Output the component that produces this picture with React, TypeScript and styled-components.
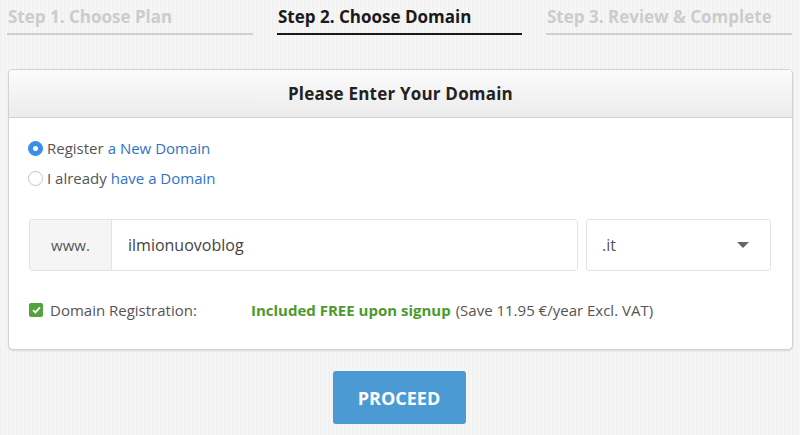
import React, { useState } from "react";
import styled, { createGlobalStyle } from "styled-components";

const Global = createGlobalStyle`
  html, body {
    margin: 0;
    padding: 0;
  }
  body {
    background: repeating-linear-gradient(90deg, #f2f2f2 0 2px, #f6f6f6 2px 4px);
    font-family: "Open Sans", "Liberation Sans", sans-serif;
    color: #555;
  }
`;

const Page = styled.div`
  width: 800px;
  height: 435px;
  box-sizing: border-box;
  padding: 0 9px 0 7px;
  display: flex;
  flex-direction: column;
`;

const Steps = styled.div`
  display: grid;
  grid-template-columns: 246px 245px 246px;
  column-gap: 24px;
  height: 37px;
`;

const Step = styled.div<{ $active?: boolean }>`
  font-size: 17px;
  font-weight: 700;
  line-height: 20px;
  padding-top: 7px;
  padding-left: 1px;
  height: 35px;
  box-sizing: border-box;
  color: ${(p) => (p.$active ? "#1a1a1a" : "#cccccc")};
  border-bottom: 2px solid ${(p) => (p.$active ? "#1a1a1a" : "#cfcfcf")};
  white-space: nowrap;
`;

const Card = styled.div`
  margin-top: 32px;
  margin-left: 1px;
  width: 783px;
  background: #fff;
  border: 1px solid #d2d2d2;
  border-radius: 5px;
  box-shadow: 0 1px 2px rgba(0, 0, 0, 0.12);
  overflow: hidden;
`;

const CardHeader = styled.div`
  height: 47px;
  display: flex;
  align-items: center;
  justify-content: center;
  background: linear-gradient(#fbfbfb, #ececec);
  border-bottom: 1px solid #d0d0d0;
  font-size: 17px;
  font-weight: 700;
  color: #222;
  letter-spacing: 0.2px;
`;

const CardBody = styled.div`
  padding: 20px 20px 29px 20px;
  display: flex;
  flex-direction: column;
`;

const RadioRow = styled.label<{ $last?: boolean }>`
  display: flex;
  align-items: center;
  height: 20px;
  margin-bottom: ${(p) => (p.$last ? "0" : "10px")};
  font-size: 15px;
  color: #555;
  cursor: pointer;
`;

const RadioDot = styled.span<{ $checked?: boolean }>`
  width: 15px;
  height: 15px;
  box-sizing: border-box;
  border-radius: 50%;
  margin-left: -1px;
  margin-right: 4px;
  display: inline-flex;
  align-items: center;
  justify-content: center;
  background: ${(p) => (p.$checked ? "#3a8ee6" : "#fff")};
  border: 1px solid ${(p) => (p.$checked ? "#3a8ee6" : "#c4c4c4")};
  &::after {
    content: "";
    width: 5px;
    height: 5px;
    border-radius: 50%;
    background: #fff;
    display: ${(p) => (p.$checked ? "block" : "none")};
  }
`;

const Link = styled.a`
  color: #2e74c4;
  text-decoration: none;
  margin-left: 4px;
`;

const DomainRow = styled.div`
  display: flex;
  gap: 8px;
  margin-top: 31px;
  height: 52px;
`;

const InputGroup = styled.div`
  display: flex;
  width: 547px;
  border: 1px solid #e3e3e3;
  border-radius: 3px;
  overflow: hidden;
`;

const Addon = styled.div`
  width: 81px;
  display: flex;
  align-items: center;
  justify-content: center;
  background: #f5f5f5;
  border-right: 1px solid #e3e3e3;
  font-size: 15px;
  color: #555;
`;

const TextInput = styled.input`
  flex: 1;
  border: none;
  outline: none;
  padding: 0 16px;
  font-family: "Open Sans", "Liberation Sans", sans-serif;
  font-size: 16px;
  color: #444;
  background: #fff;
`;

const Select = styled.div`
  width: 185px;
  box-sizing: border-box;
  border: 1px solid #e3e3e3;
  border-radius: 3px;
  display: flex;
  align-items: center;
  justify-content: space-between;
  padding: 0 21px 0 15px;
  font-size: 16px;
  color: #555;
`;

const Caret = styled.span`
  width: 0;
  height: 0;
  border-left: 6px solid transparent;
  border-right: 6px solid transparent;
  border-top: 6px solid #666;
`;

const RegRow = styled.div`
  display: flex;
  align-items: center;
  margin-top: 29px;
  height: 20px;
  font-size: 15px;
`;

const Check = styled.span`
  width: 14px;
  height: 14px;
  border-radius: 2px;
  background: #52a33a;
  display: inline-flex;
  align-items: center;
  justify-content: center;
  margin-right: 7px;
`;

const RegLabel = styled.span`
  width: 201px;
  color: #555;
`;

const Free = styled.strong`
  color: #4d9a2c;
  font-weight: 700;
  margin-right: 5px;
`;

const Note = styled.span`
  color: #555;
`;

const Actions = styled.div`
  display: flex;
  justify-content: center;
  margin-top: 21px;
`;

const Proceed = styled.button`
  width: 133px;
  height: 53px;
  border: none;
  border-radius: 3px;
  background: #4b9ad4;
  color: #fff;
  font-family: "Open Sans", "Liberation Sans", sans-serif;
  font-size: 18px;
  font-weight: 700;
  cursor: pointer;
`;

export default function App() {
  const [mode, setMode] = useState<"new" | "own">("new");
  const [domain, setDomain] = useState("ilmionuovoblog");

  return (
    <>
      <Global />
      <Page>
        <Steps>
          <Step>Step 1. Choose Plan</Step>
          <Step $active>Step 2. Choose Domain</Step>
          <Step>Step 3. Review &amp; Complete</Step>
        </Steps>

        <Card>
          <CardHeader>Please Enter Your Domain</CardHeader>
          <CardBody>
            <RadioRow onClick={() => setMode("new")}>
              <RadioDot $checked={mode === "new"} />
              Register<Link>a New Domain</Link>
            </RadioRow>
            <RadioRow $last onClick={() => setMode("own")}>
              <RadioDot $checked={mode === "own"} />
              I already<Link>have a Domain</Link>
            </RadioRow>

            <DomainRow>
              <InputGroup>
                <Addon>www.</Addon>
                <TextInput value={domain} onChange={(e) => setDomain(e.target.value)} />
              </InputGroup>
              <Select>
                .it
                <Caret />
              </Select>
            </DomainRow>

            <RegRow>
              <Check>
                <svg width="9" height="8" viewBox="0 0 9 8">
                  <path d="M1 4.2 L3.4 6.4 L8 1.4" fill="none" stroke="#fff" strokeWidth="1.8" />
                </svg>
              </Check>
              <RegLabel>Domain Registration:</RegLabel>
              <Free>Included FREE upon signup</Free>
              <Note>(Save 11.95 €/year Excl. VAT)</Note>
            </RegRow>
          </CardBody>
        </Card>

        <Actions>
          <Proceed>PROCEED</Proceed>
        </Actions>
      </Page>
    </>
  );
}
